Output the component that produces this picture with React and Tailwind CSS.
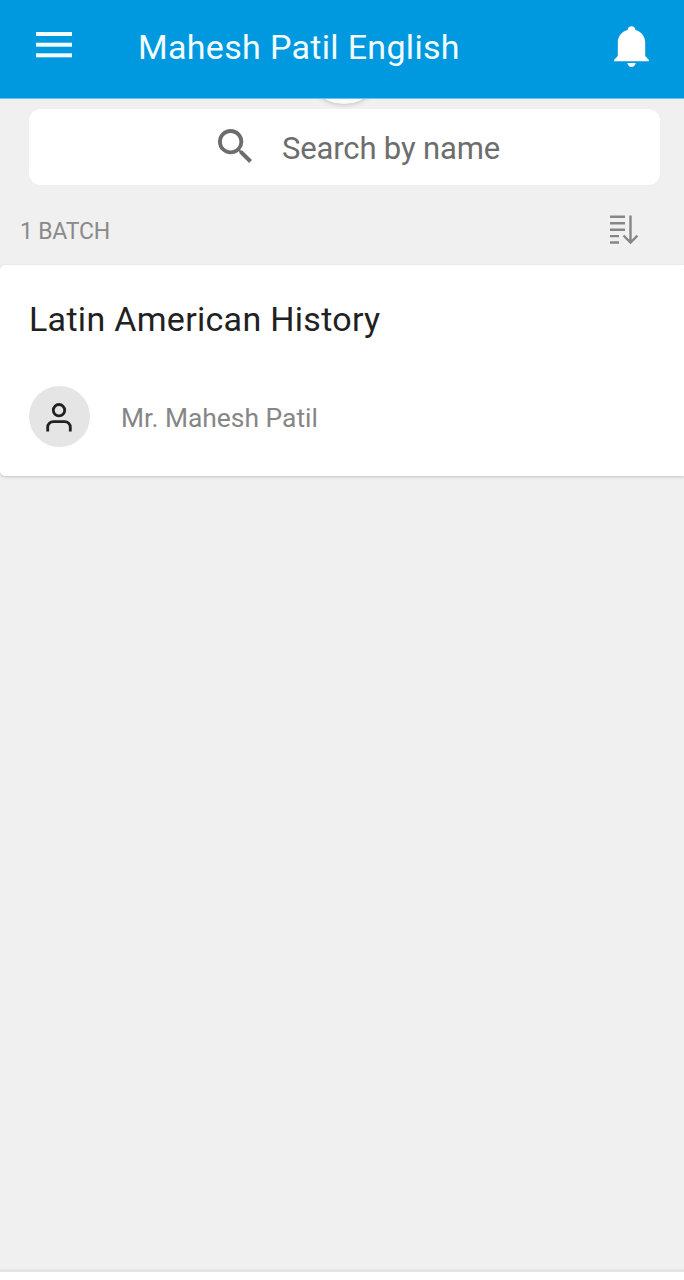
function MenuIcon() {
  return (
    <svg className="block h-[26px] w-9" viewBox="0 0 36 26" fill="#f2fcff">
      <rect y="0" width="36" height="4" />
      <rect y="10.7" width="36" height="4" />
      <rect y="21.3" width="36" height="4" />
    </svg>
  );
}

function BellIcon() {
  return (
    <svg className="block h-[42px] w-[35px]" viewBox="0 0 35 42" fill="#fff">
      <path d="M17.500 0.300c2.200 0 3.700 1.600 4 3.700 5.700 1.600 9.700 6.500 9.700 12.400V30l3.600 3.700v1.500H0.200v-1.500L3.800 30V16.400C3.800 10.500 7.800 5.600 13.500 4c0.300-2.100 1.800-3.700 4-3.700z" />
      <path d="M13.300 37.100h8.400c-0.300 2.300-2 4-4.200 4s-3.900-1.700-4.200-4z" />
    </svg>
  );
}

function SearchIcon() {
  return (
    <svg className="block h-[34px] w-[34px]" viewBox="3 3 17.490 17.490" fill="#6d6d6d">
      <path d="M15.500 14h-.79l-.28-.27A6.471 6.471 0 0 0 16 9.500 6.500 6.500 0 1 0 9.500 16c1.610 0 3.090-.59 4.230-1.570l.27.28v.79l5 4.990L20.490 19l-4.990-5zm-6 0C7.010 14 5 11.990 5 9.500S7.010 5 9.500 5 14 7.010 14 9.500 11.990 14 9.500 14z" />
    </svg>
  );
}

function SortIcon() {
  return (
    <svg className="block h-[30px] w-7" viewBox="0 0 28 30" fill="none" stroke="#868686" strokeWidth="2.400">
      <path d="M0 1.800h15M0 8.200h15M0 14.700h15M0 21.100h9M0 27.500h9" />
      <path d="M20.500 0.500v27M13.500 20.500l7 7 7-7" />
    </svg>
  );
}

function PersonIcon() {
  return (
    <svg className="block h-[30px] w-[26px]" viewBox="0 0 26 30" fill="none" stroke="#212121" strokeWidth="2.800">
      <circle cx="13" cy="8.200" r="5.700" />
      <path d="M1.700 29.500v-4.300a5.600 5.600 0 0 1 5.600-5.600h11.400a5.600 5.600 0 0 1 5.600 5.600v4.300" />
    </svg>
  );
}

export default function App() {
  return (
    <div className="flex h-[1280px] w-[684px] flex-col overflow-hidden bg-[#f0f0f0] font-[Roboto,sans-serif]">
      <header className="relative z-10 flex h-[99px] shrink-0 items-start border-b border-[#6fc4ee] bg-[#0099e0] pl-9 pr-[35px] pt-[26px] text-[#f2fcff]">
        <div className="mt-[6px]">
          <MenuIcon />
        </div>
        <h1 className="ml-[66px] grow whitespace-nowrap text-[34px] leading-[42px] tracking-[0.32px]">Mahesh Patil English</h1>
        <BellIcon />
      </header>

      <main className="relative flex grow flex-col">
        <div className="absolute left-[304px] top-[-75px] h-20 w-20 rounded-full bg-[#fafafa] shadow-[0_1px_4px_rgba(0,0,0,0.2)]" />
        <div className="relative ml-[29px] mr-6 mt-[10px] flex h-[76px] shrink-0 rounded-[12px] bg-white pl-[189px]">
          <div className="mt-[20px]">
            <SearchIcon />
          </div>
          <span className="ml-[30px] mt-[20px] whitespace-nowrap text-[31px] leading-[40px] tracking-[-0.15px] text-[#6d6d6d]">Search by name</span>
        </div>

        <div className="flex h-20 shrink-0 justify-between pl-5 pr-[46px] pt-[30px]">
          <span className="mt-px whitespace-nowrap text-[23px] leading-[32px] tracking-[-0.2px] text-[#8a8a8a]">1 BATCH</span>
          <SortIcon />
        </div>

        <section className="h-[211px] shrink-0 rounded-l-[5px] bg-white pl-[29px] pt-[34px] shadow-[0_1px_3px_rgba(0,0,0,0.2)]">
          <h2 className="whitespace-nowrap text-[34px] leading-[40px] tracking-[0.3px] text-[#212121]">Latin American History</h2>
          <div className="mt-[47px] flex items-center">
            <div className="flex h-[61px] w-[61px] items-center justify-center rounded-full bg-[#e5e5e5] pr-px">
              <PersonIcon />
            </div>
            <span className="ml-[31px] mt-[2px] whitespace-nowrap text-[26.400px] leading-[32px] text-[#868686]">Mr. Mahesh Patil</span>
          </div>
        </section>
      </main>

      <footer className="h-[11px] shrink-0 border-t-[3px] border-[#e4e4e4] bg-white" />
    </div>
  );
}
